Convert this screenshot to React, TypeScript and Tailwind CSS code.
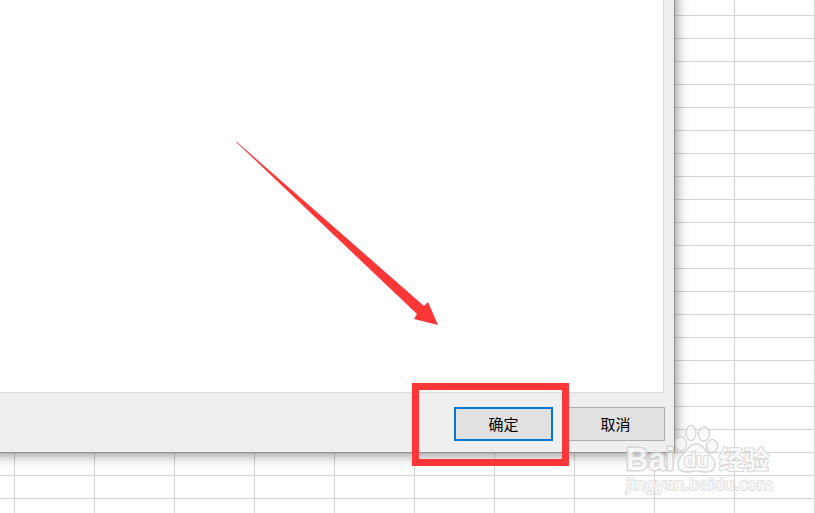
import React from 'react';

function Watermark() {
  return (
    <svg
      className="pointer-events-none absolute right-10 bottom-3 h-20 w-[152px] opacity-80"
      viewBox="0 0 152 80"
      fill="#fafafa"
      stroke="#cfcfcf"
      strokeWidth="3"
      strokeLinejoin="round"
      aria-hidden="true"
    >
      {/* paw */}
      <g strokeWidth="1.5" fillOpacity="0.8">
        <ellipse cx="58" cy="23" rx="5.5" ry="7" transform="rotate(-8 58 23)" />
        <ellipse cx="68" cy="12" rx="5" ry="7.5" />
        <ellipse cx="81" cy="13" rx="5.5" ry="7" transform="rotate(8 81 13)" />
        <ellipse cx="89" cy="25" rx="5.5" ry="6.5" transform="rotate(12 89 25)" />
        <path d="M73 23 C79 23 81 28 84 31 C88 35 92 38 92 43 C92 49 88 51 83 51 C79 51 77 50 73 50 C69 50 67 51 63 51 C58 51 55 48 55 43 C55 38 58 35 62 31 C66 27 67 23 73 23 Z" />
      </g>

      <text x="3" y="49" className="font-['Liberation_Sans'] text-[31px] font-bold [paint-order:stroke]">
        Bai
      </text>
      <text x="61" y="46" strokeWidth="2" className="font-['Liberation_Sans'] text-[20px] font-bold [paint-order:stroke]">
        du
      </text>
      <text x="96" y="48" strokeWidth="2" className="font-['Noto_Sans_CJK_SC',sans-serif] text-[25px] font-bold [paint-order:stroke]">
        经验
      </text>
      <text x="3" y="69" stroke="#dcdcdc" strokeWidth="2" className="font-['Noto_Sans'] text-[17px] [paint-order:stroke]">
        jingyan.baidu.com
      </text>
    </svg>
  );
}

function Arrow() {
  return (
    <svg
      className="pointer-events-none absolute right-[377px] bottom-[188px] h-[184px] w-[202px]"
      viewBox="0 0 202 184"
      fill="#fd3737"
      aria-hidden="true"
    >
      <path d="M0 1 L1 1 L188 165 L192 161 L202 184 L178 178 L181 173 Z" />
    </svg>
  );
}

export default function App() {
  return (
    <main className="relative h-screen overflow-hidden bg-white bg-[linear-gradient(to_right,#d4d4d4_1px,transparent_1px),linear-gradient(to_bottom,#d4d4d4_1px,transparent_1px)] bg-[size:80px_23px] bg-[position:14px_15px] font-['Noto_Sans_CJK_SC',sans-serif]">
      {/* dialog, running off the top left corner */}
      <section className="absolute -top-5 right-[140px] bottom-[60px] -left-5 flex flex-col border-r border-b border-[#919191] bg-[#efefef] shadow-[1px_2px_12px_rgba(0,0,0,0.45)]">
        <div className="mr-2.5 flex-1 border-r border-b border-[#d9d9d9] bg-white" />

        <footer className="flex justify-end gap-[13px] px-[9px] pt-3.5 pb-[11px]">
          <button
            type="button"
            className="h-[34px] w-[99px] border-2 border-[#0078d7] bg-[#e1e1e1] text-[15px] leading-5 text-black"
          >
            确定
          </button>
          <button
            type="button"
            className="h-[34px] w-[99px] border border-[#adadad] bg-[#e1e1e1] text-[15px] leading-5 text-black"
          >
            取消
          </button>
        </footer>
      </section>

      {/* highlight around the confirm button */}
      <div className="pointer-events-none absolute right-[246px] bottom-[47px] h-[83px] w-[157px] border-7 border-[#fd3737]" />
      <Arrow />
      <Watermark />
    </main>
  );
}
